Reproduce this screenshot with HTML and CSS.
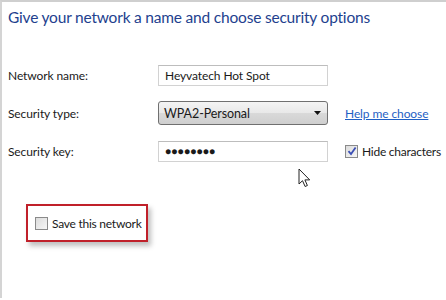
FILE: index.html
```html
<!DOCTYPE html>
<html>
<head>
  <title>Set up a wireless ad hoc network</title>
  <meta charset="utf-8">
  <link rel="stylesheet" href="styles.css">
</head>
<body>
  <div class="wizard">
    <div class="wizard-title">Give your network a name and choose security options</div>

    <div class="form-grid">
      <label class="field-label">Network name:</label>
      <div class="text-box">Heyvatech Hot Spot</div>
      <div></div>

      <label class="field-label">Security type:</label>
      <div class="combo-box">
        <span>WPA2-Personal</span>
        <svg class="combo-arrow" width="7" height="4" viewBox="0 0 7 4"><path d="M0 0h7L3.5 4z" fill="#111"/></svg>
      </div>
      <a class="help-link" href="#">Help me choose</a>

      <label class="field-label">Security key:</label>
      <div class="text-box key-box">&#9679;&#9679;&#9679;&#9679;&#9679;&#9679;&#9679;&#9679;</div>
      <div class="check-row">
        <span class="check-box checked">
          <svg width="10" height="10" viewBox="0 0 10 10"><path d="M1.5 5.2L4 8 8.6 1.5" fill="none" stroke="#3b4fb5" stroke-width="1.8"/></svg>
        </span>
        <span>Hide characters</span>
      </div>
    </div>

    <div class="save-frame">
      <div class="check-row">
        <span class="check-box"></span>
        <span>Save this network</span>
      </div>
    </div>

    <!-- mouse pointer from the screenshot -->
    <svg class="pointer" width="14" height="20" viewBox="0 0 14 20">
      <path d="M1 1v15l3.5-3.3 2.6 5.8 2.3-1-2.5-5.6h4.8z" fill="#fff" stroke="#222" stroke-width="1"/>
    </svg>
  </div>
</body>
</html>
```

FILE: styles.css
```css
body {
  margin: 0;
  background: #fff;
  width: 446px;
  height: 300px;
  overflow: hidden;
  font-family: Lato, 'Noto Sans', sans-serif;
  color: #1a1a1a;
}

.wizard {
  position: relative;
  height: 298px;
  border-top: 2px solid #cfcfcf;
  border-left: 2px solid #d4d4d4;
  padding: 5px 0 0 6px;
  box-sizing: border-box;
}

.wizard-title {
  color: #233f8e;
  font-size: 15.5px;
  letter-spacing: -0.2px;
  line-height: 20px;
  white-space: nowrap;
}

.form-grid {
  display: grid;
  grid-template-columns: 150px 170px max-content;
  grid-auto-rows: 22px;
  row-gap: 16px;
  align-items: center;
  margin-top: 37px;
  font-size: 12px;
  letter-spacing: -0.1px;
}

.field-label {
  align-self: center;
}

.text-box {
  height: 21px;
  border: 1px solid #d2d2d2;
  border-top-color: #bdbdbd;
  box-sizing: border-box;
  padding: 0 6px;
  line-height: 19px;
  background: #fff;
  white-space: nowrap;
}

.key-box {
  font-size: 10px;
  letter-spacing: 0.3px;
}

.combo-box {
  height: 24px;
  border: 1px solid #707070;
  border-radius: 3px;
  box-sizing: border-box;
  padding: 0 6px 0 5px;
  display: flex;
  align-items: center;
  justify-content: space-between;
  background: linear-gradient(#f4f4f4, #e8e8e8 50%, #d9d9d9 51%, #cfcfcf);
  font-size: 12.5px;
}

.help-link {
  color: #1f5fc4;
  text-decoration: underline;
  margin-left: 17px;
  white-space: nowrap;
}

.check-row {
  display: flex;
  align-items: center;
  gap: 4px;
  font-size: 12px;
  letter-spacing: -0.25px;
  white-space: nowrap;
}

.form-grid .check-row {
  margin-left: 17px;
}

.check-box {
  width: 11px;
  height: 11px;
  border: 1px solid #8a8a8a;
  background: linear-gradient(135deg, #dcdcdc, #f6f6f6);
  display: flex;
  align-items: center;
  justify-content: center;
}

.save-frame {
  width: 122px;
  height: 38px;
  box-sizing: border-box;
  border: 2px solid #c0202a;
  margin: 42px 0 0 18px;
  padding: 0 0 0 7px;
  display: flex;
  align-items: center;
  box-shadow: 3px 4px 5px rgba(0, 0, 0, 0.25);
}

.pointer {
  position: absolute;
  left: 296px;
  top: 166px;
}
```
